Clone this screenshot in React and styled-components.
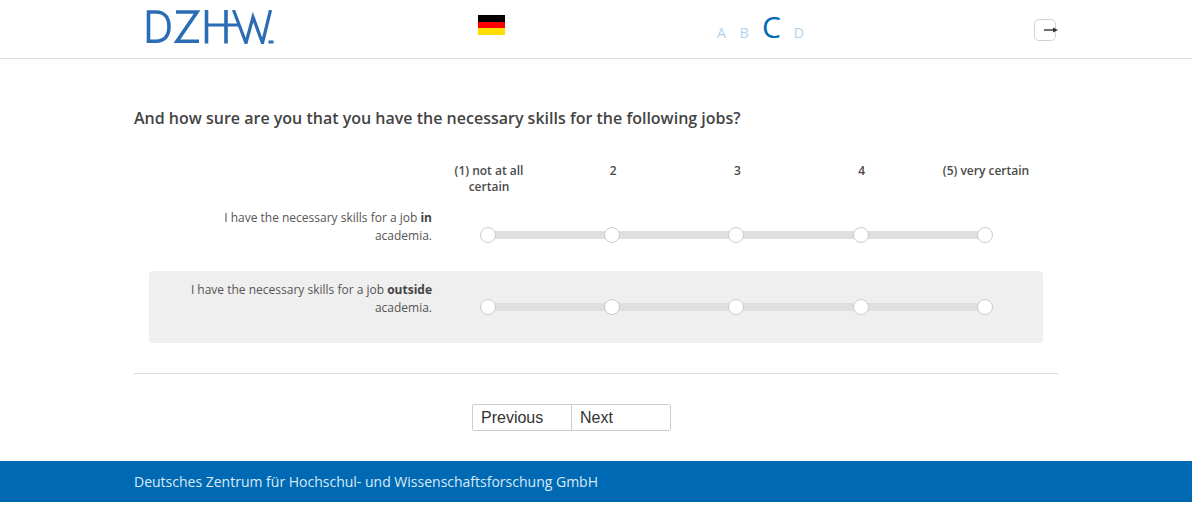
import styled, { createGlobalStyle } from "styled-components";

const GlobalStyle = createGlobalStyle`
  html, body {
    margin: 0;
    padding: 0;
    background: #fff;
  }
  body {
    font-family: "Open Sans", "Liberation Sans", sans-serif;
    color: #444;
  }
`;

const scale = ["(1) not at all certain", "2", "3", "4", "(5) very certain"];

const items = [
  { id: "in", before: "I have the necessary skills for a job ", bold: "in", after: "academia." },
  { id: "outside", before: "I have the necessary skills for a job ", bold: "outside", after: "academia.", shaded: true },
];

const steps = ["A", "B", "C", "D"];

const Logo = () => (
  <LogoSvg viewBox="0 0 128 34" width="128" height="34" aria-label="DZHW">
    <g fill="none" stroke="#2b6cb5" strokeWidth="3.600">
      <path d="M2.500 2H10c9 0 13 6 13 14.500S19 31.200 10 31.200H2.500z" />
      <path d="M30 2h21L31 31.200h22" />
      <path d="M60.500 0v33.500M80 0v33.500" />
      <path d="M60 15h33" strokeWidth="2.800" />
      <path d="M87.500 0l12.500 33 7-26 9.500 26 8-33" strokeWidth="3.200" />
    </g>
    <rect x="122.500" y="30.500" width="5" height="3" fill="#2b6cb5" />
  </LogoSvg>
);

const Flag = () => (
  <FlagBox>
    <FlagStripe $color="#000" />
    <FlagStripe $color="#f00" />
    <FlagStripe $color="#ffdf00" />
  </FlagBox>
);

const App = () => (
  <Page>
    <GlobalStyle />
    <Header>
      <HeaderInner>
        <Logo />
        <Flag />
        <Steps>
          {steps.map((s) => (
            <Step key={s} $active={s === "C"}>{s}</Step>
          ))}
        </Steps>
        <ExitButton aria-label="Exit">
          <ExitArrow viewBox="0 0 14 8">
            <path d="M0 4h10" stroke="#333" strokeWidth="1.400" />
            <path d="M9 1.500 14 4 9 6.500z" fill="#333" />
          </ExitArrow>
        </ExitButton>
      </HeaderInner>
    </Header>

    <Main>
      <Question>And how sure are you that you have the necessary skills for the following jobs?</Question>

      <ScaleHead>
        {scale.map((label) => (
          <ScaleLabel key={label}>{label}</ScaleLabel>
        ))}
      </ScaleHead>

      {items.map((item) => (
        <ItemRow key={item.id} $shaded={item.shaded}>
          <ItemLabel>
            {item.before}
            <b>{item.bold}</b> {item.after}
          </ItemLabel>
          <Slider>
            {scale.map((label) => (
              <Handle key={label} />
            ))}
          </Slider>
        </ItemRow>
      ))}

      <Divider />

      <Buttons>
        <NavButton>Previous</NavButton>
        <NavButton>Next</NavButton>
      </Buttons>
    </Main>

    <Footer>
      <FooterText>Deutsches Zentrum für Hochschul- und Wissenschaftsforschung GmbH</FooterText>
    </Footer>
  </Page>
);

export default App;

const Page = styled.div`
  width: 1192px;
  min-height: 511px;
  overflow: hidden;
`;

const Header = styled.header`
  height: 58px;
  border-bottom: 1px solid #ddd;
`;

const HeaderInner = styled.div`
  width: 924px;
  height: 58px;
  margin: 0 auto;
  display: flex;
  align-items: flex-start;
`;

const LogoSvg = styled.svg`
  display: block;
  margin: 10px 0 0 12px;
`;

const FlagBox = styled.div`
  width: 27px;
  height: 20px;
  margin: 15px 0 0 204px;
  display: flex;
  flex-direction: column;
`;

const FlagStripe = styled.div`
  flex: 1;
  background: ${(p) => p.$color};
`;

const Steps = styled.div`
  display: flex;
  align-items: baseline;
  gap: 14px;
  margin: 7px 0 0 212px;
  height: 40px;
  line-height: 40px;
`;

const Step = styled.span`
  font-size: ${(p) => (p.$active ? "30px" : "14px")};
  margin: ${(p) => (p.$active ? "0 -1px" : "0")};
  color: ${(p) => (p.$active ? "#0069b4" : "#b3d2e9")};
`;

const ExitButton = styled.button`
  width: 22px;
  height: 22px;
  margin: 19px 2px 0 auto;
  padding: 0 0 0 9px;
  background: #fff;
  border: 1px solid #d2d2d2;
  border-radius: 5px;
  display: flex;
  align-items: center;
  overflow: visible;
`;

const ExitArrow = styled.svg`
  flex: none;
  width: 14px;
  height: 8px;
`;

const Main = styled.main`
  width: 924px;
  margin: 0 auto;
`;

const Question = styled.h1`
  margin: 47px 0 0;
  font-size: 16px;
  line-height: 24px;
  font-weight: 600;
  color: #444;
`;

const ScaleHead = styled.div`
  display: grid;
  grid-template-columns: repeat(5, 124.25px);
  margin: 33px 0 4px 292.900px;
`;

const ScaleLabel = styled.div`
  padding: 0 18px;
  font-size: 12px;
  line-height: 16px;
  font-weight: 600;
  text-align: center;
  color: #4a4a4a;
`;

const ItemRow = styled.div`
  display: flex;
  align-items: flex-start;
  width: 894px;
  height: 72px;
  margin-left: 15px;
  padding-top: 10px;
  box-sizing: border-box;
  border-radius: 4px;
  background: ${(p) => (p.$shaded ? "#efefef" : "transparent")};
`;

const ItemLabel = styled.div`
  width: 245px;
  margin-left: 38px;
  font-size: 12px;
  line-height: 18px;
  text-align: right;
  color: #555;
  b {
    font-weight: 700;
    color: #444;
  }
`;

const Slider = styled.div`
  position: relative;
  display: flex;
  justify-content: space-between;
  width: 513px;
  height: 16px;
  margin: 18px 0 0 47.800px;
  &::before {
    content: "";
    position: absolute;
    left: 8px;
    right: 8px;
    top: 4px;
    height: 8px;
    background: #dfdfdf;
  }
`;

const Handle = styled.span`
  position: relative;
  width: 16px;
  height: 16px;
  box-sizing: border-box;
  border: 1px solid #ccc;
  border-radius: 50%;
  background: #fff;
`;

const Divider = styled.hr`
  margin: 30px 0 0;
  border: 0;
  border-top: 1px solid #ddd;
`;

const Buttons = styled.div`
  display: flex;
  width: 199px;
  height: 27px;
  margin: 30px 0 0 338px;
  box-sizing: border-box;
  border: 1px solid #ccc;
  border-radius: 2px;
`;

const NavButton = styled.button`
  flex: 1;
  padding: 0 0 0 8px;
  border: 0;
  background: #fff;
  font-family: "Liberation Sans", Arial, sans-serif;
  font-size: 16px;
  text-align: left;
  color: #333;
  & + & {
    border-left: 1px solid #ccc;
  }
`;

const Footer = styled.footer`
  height: 41px;
  margin-top: 30px;
  background: #0069b4;
`;

const FooterText = styled.div`
  width: 924px;
  margin: 0 auto;
  font-size: 14px;
  line-height: 41px;
  color: #dbe9f4;
`;
